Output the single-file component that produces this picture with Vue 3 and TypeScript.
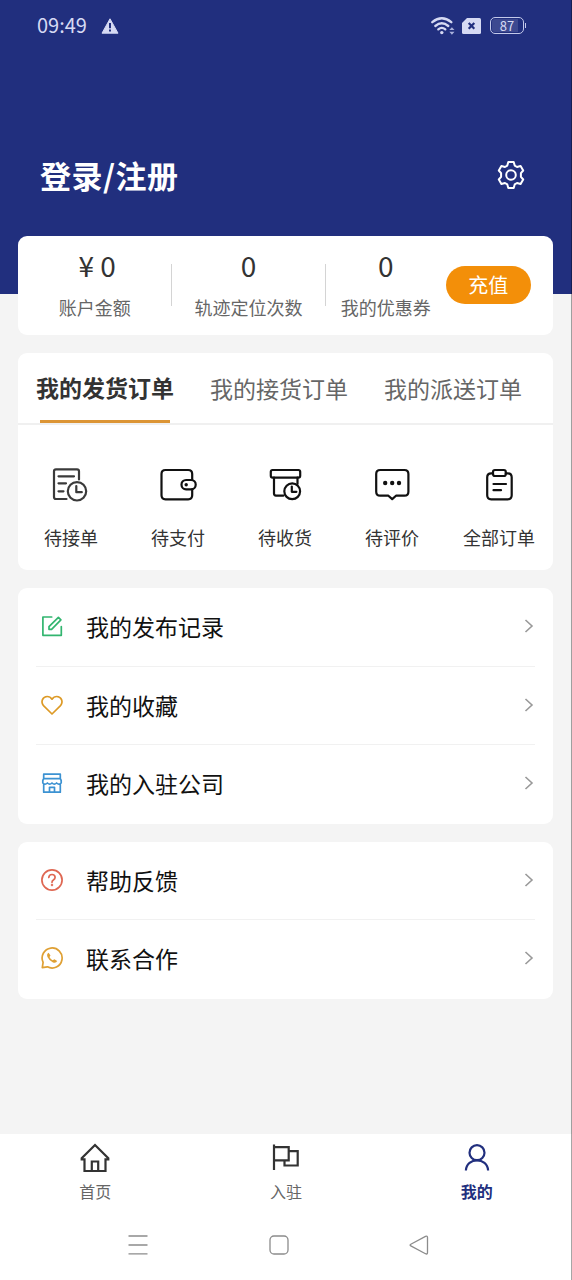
<script setup lang="ts">
interface Stat {
  value: string
  label: string
}

interface OrderEntry {
  icon: 'accept' | 'pay' | 'receive' | 'review' | 'all'
  label: string
}

interface MenuItem {
  icon: 'edit' | 'heart' | 'shop' | 'help' | 'phone'
  label: string
}

interface TabItem {
  icon: 'home' | 'flag' | 'user'
  label: string
  active: boolean
}

const stats: Stat[] = [
  { value: '¥ 0', label: '账户金额' },
  { value: '0', label: '轨迹定位次数' },
  { value: '0', label: '我的优惠券' },
]

const orderTabs: string[] = ['我的发货订单', '我的接货订单', '我的派送订单']

const orders: OrderEntry[] = [
  { icon: 'accept', label: '待接单' },
  { icon: 'pay', label: '待支付' },
  { icon: 'receive', label: '待收货' },
  { icon: 'review', label: '待评价' },
  { icon: 'all', label: '全部订单' },
]

const menus: MenuItem[][] = [
  [
    { icon: 'edit', label: '我的发布记录' },
    { icon: 'heart', label: '我的收藏' },
    { icon: 'shop', label: '我的入驻公司' },
  ],
  [
    { icon: 'help', label: '帮助反馈' },
    { icon: 'phone', label: '联系合作' },
  ],
]

const tabs: TabItem[] = [
  { icon: 'home', label: '首页', active: false },
  { icon: 'flag', label: '入驻', active: false },
  { icon: 'user', label: '我的', active: true },
]
</script>

<template>
  <div class="page">
    <header class="hero">
      <div class="status">
        <span class="time">09:49</span>
        <svg class="warn" width="18" height="16" viewBox="0 0 18 16">
          <path d="M9 .8 17 15.2H1z" fill="#d6daf3" stroke="#d6daf3" stroke-linejoin="round" />
          <path d="M9 5v5.2M9 11.600v2" stroke="#212f7e" stroke-width="2" />
        </svg>
        <div class="signals">
          <svg width="24" height="18" viewBox="0 0 24 18">
            <g fill="none" stroke="#d6daf3" stroke-width="2.300" stroke-linecap="round">
              <path d="M1.300 5.200Q10.800-2.600 20.300 5.200" />
              <path d="M4.300 9Q10.800 3.500 17.300 9" />
              <path d="M7.300 12.400Q10.800 9.400 14.300 12.400" />
            </g>
            <circle cx="10.800" cy="15.600" r="1.700" fill="#d6daf3" />
            <path d="M18.300 13.100 20.900 10.200 23.500 13.100zM18.300 14.800h5.200L20.900 17.700z" fill="#a9b1dc" />
          </svg>
          <svg class="sim" width="19" height="16" viewBox="0 0 19 16">
            <path d="M5 0h12.500Q19 0 19 1.500v13Q19 16 17.500 16h-16Q0 16 0 14.500V5z" fill="#d6daf3" />
            <path d="m6.700 5 5.600 5.800m0-5.800-5.600 5.800" stroke="#212f7e" stroke-width="2.200" />
          </svg>
          <span class="battery"><span class="level">87</span></span>
        </div>
      </div>
      <div class="account">
        <h1>登录/注册</h1>
        <svg width="30" height="30" viewBox="0 0 30 30" fill="none" stroke="#fff" stroke-width="2" stroke-linejoin="round">
          <path d="M12.300 2.100h5.400l1 3.500 2.300 1.400 3.600-1 2.600 4.500-2.300 2.700v3.600l2.300 2.700-2.600 4.500-3.600-1-2.300 1.400-1 3.500h-5.400l-1-3.500L9 23l-3.600 1-2.600-4.500 2.300-2.700v-3.600l-2.300-2.700L5.400 6 9 7l2.300-1.400z" />
          <circle cx="15" cy="15" r="4.800" />
        </svg>
      </div>
    </header>

    <main class="content">
      <section class="card stats">
        <div v-for="s in stats" :key="s.label" class="stat">
          <strong>{{ s.value }}</strong>
          <span>{{ s.label }}</span>
        </div>
        <button class="recharge" type="button">充值</button>
      </section>

      <section class="card orders">
        <nav class="order-tabs">
          <span v-for="(t, i) in orderTabs" :key="t" class="order-tab" :class="{ current: i === 0 }">{{ t }}</span>
        </nav>
        <div class="entries">
          <div v-for="o in orders" :key="o.icon" class="entry">
            <svg width="40" height="40" viewBox="0 0 40 40" class="line-icon" :class="o.icon">
              <template v-if="o.icon === 'accept'">
                <path d="M28 14.500V6.300q0-2-2-2H5q-2 0-2 2V32q0 2 2 2h10.500M7.500 11.300H23M7.500 18.300H15M7.500 26.300h5" />
                <circle cx="26" cy="26.300" r="9.200" />
                <path d="M25.300 21v6.200h5.500" />
              </template>
              <template v-else-if="o.icon === 'pay'">
                <path d="M34.200 15V9q0-4-4-4H7.500q-4 0-4 4v21.300q0 4 4 4h22.700q4 0 4-4v-6" />
                <rect x="23.500" y="15" width="14.200" height="9.300" rx="4.600" />
                <circle cx="28.200" cy="19.700" r="1.700" class="dot" />
              </template>
              <template v-else-if="o.icon === 'receive'">
                <rect x="5.800" y="5" width="29.400" height="7.600" rx="1.800" />
                <path d="M9 12.600v16q0 2 2 2h7.500M32.500 12.600V19" />
                <circle cx="27.200" cy="26.300" r="7.900" />
                <path d="M26.800 21.500v5.300h4.600" />
              </template>
              <template v-else-if="o.icon === 'review'">
                <path d="M8.200 5h24.200q4 0 4 4v17.700q0 4-4 4H24l-3.800 3.400-3.800-3.400H8.200q-4 0-4-4V9q0-4 4-4z" />
                <circle cx="13.200" cy="18" r="2.200" class="dot" />
                <circle cx="20.200" cy="18" r="2.200" class="dot" />
                <circle cx="27" cy="18" r="2.200" class="dot" />
              </template>
              <template v-else>
                <path d="M14 8.300h-1.800q-4 0-4 4v18q0 4 4 4h16.500q4 0 4-4v-18q0-4-4-4h-2M14.500 19h12.500M14.500 25.200h7.500" />
                <rect x="14" y="5" width="12.800" height="6" rx="2" />
              </template>
            </svg>
            <span>{{ o.label }}</span>
          </div>
        </div>
      </section>

      <section v-for="(group, g) in menus" :key="g" class="card menu">
        <div v-for="m in group" :key="m.icon" class="row">
          <svg class="row-icon" :class="m.icon" width="24" height="24" viewBox="0 0 24 24">
            <template v-if="m.icon === 'edit'">
              <path d="M11.700 3H2.900v18.300h18.400v-8.800" />
              <path d="M9 15.300v-2.600l9.400-9.300 2.500 2.500-9.300 9.400z" />
            </template>
            <template v-else-if="m.icon === 'heart'">
              <path d="M12 21 4 13.200C-.2 8.800 3 3.500 7.200 3.500c2.300 0 3.800 1.200 4.800 2.700 1-1.500 2.500-2.700 4.800-2.700 4.200 0 7.400 5.300 3.200 9.700z" />
            </template>
            <template v-else-if="m.icon === 'shop'">
              <path d="M3.700 3.200h16.600v4.500H3.700zM3.700 7.700 2.800 9.500v2.500q2.300 2.400 4.600 0 2.300 2.400 4.600 0 2.300 2.400 4.600 0 2.300 2.400 4.600 0V9.500l-.9-1.800M3.700 13.300v7.900h16.600v-7.900M9.500 21v-4.700h5V21" />
            </template>
            <template v-else-if="m.icon === 'help'">
              <circle cx="12" cy="12" r="10.100" />
              <path d="M8.800 9.500q.2-3 3.200-3t3.100 2.800q0 1.600-1.700 2.600-1.400.8-1.400 2.400" />
              <circle cx="12" cy="17" r=".4" />
            </template>
            <template v-else>
              <path d="M2.300 21.600 3.100 16.300A10 10 0 1 1 7.400 20.800z" />
              <path d="M8.600 6.800q-2.300 1.100-1.100 4.300 1.700 4 5.500 5.400 3.100 1 4.200-1.400l-2.800-1.900-1.700 1.100q-2.200-1-3.200-3.200l1-1.600z" class="handset" />
            </template>
          </svg>
          <span>{{ m.label }}</span>
          <svg class="chevron" width="10" height="14" viewBox="0 0 10 14">
            <path d="m1.500 1 6.500 6-6.500 6" />
          </svg>
        </div>
      </section>
    </main>

    <footer class="bottom">
      <nav class="tabbar">
        <div v-for="t in tabs" :key="t.icon" class="tab" :class="{ active: t.active }">
          <svg width="32" height="32" viewBox="0 0 32 32">
            <path v-if="t.icon === 'home'" d="M5.500 17.300V29h21V17.300h2.800v-1.200L16 3 2.700 16.100v1.200zM12.800 29V19.500h6.400V29" />
            <path v-else-if="t.icon === 'flag'" d="M4 2.500V28M4 5.200h14.700v13.200H4M18.700 9.200h9v14.300H14.500v-5" />
            <template v-else>
              <circle cx="16" cy="10.700" r="7.500" />
              <path d="M4.900 28.500C5.500 15 26.500 15 27.100 28.500" />
            </template>
          </svg>
          <span>{{ t.label }}</span>
        </div>
      </nav>
      <div class="system">
        <svg width="22" height="22" viewBox="0 0 22 22"><path d="M1.500 2h19M1.500 11h19M1.500 19.800h19" /></svg>
        <svg width="22" height="22" viewBox="0 0 22 22"><rect x="2" y="2" width="18" height="18" rx="4" /></svg>
        <svg width="22" height="22" viewBox="0 0 22 22"><path d="M2.800 10.200 17.500 2.400q2-.8 2 1.200v15q0 2-2 1.100L2.800 11.900q-1.500-.8 0-1.700z" /></svg>
      </div>
    </footer>
  </div>
</template>

<style>
body {
  margin: 0;
}
</style>

<style scoped>
.page {
  position: relative;
  display: flex;
  flex-direction: column;
  width: 572px;
  height: 1280px;
  overflow: hidden;
  background: #f4f4f4;
  color: #333;
  font-family: "Noto Sans CJK SC", sans-serif;
}

.page::after {
  content: "";
  position: absolute;
  inset: 0 0 0 auto;
  width: 1px;
  background: rgba(0, 0, 0, 0.35);
}

svg {
  display: block;
  flex: none;
}

.hero {
  box-sizing: border-box;
  height: 294px;
  flex: none;
  background: #212f7e;
}

.status {
  display: flex;
  align-items: center;
  height: 51px;
  padding: 0 46px 0 37px;
  color: #d6daf3;
}

.time {
  margin-bottom: 2px;
  font-size: 20px;
  line-height: 30px;
}

.warn {
  margin-left: 14px;
}

.signals {
  display: flex;
  align-items: center;
  margin-left: auto;
}

.sim {
  margin: 0 9px 0 7px;
}

.battery {
  position: relative;
  box-sizing: border-box;
  display: flex;
  width: 34px;
  height: 17px;
  padding: 1px;
  margin-right: 2px;
  border: 1.500px solid #c3c9ea;
  border-radius: 5px;
}

.battery::after {
  content: "";
  position: absolute;
  top: 5px;
  right: -3px;
  width: 1.500px;
  height: 5px;
  background: #c3c9ea;
}

.level {
  flex: 1;
  border-radius: 3px;
  background: linear-gradient(90deg, #3d4990 86%, transparent 86%);
  font-size: 13px;
  line-height: 13px;
  text-align: center;
}

.account {
  display: flex;
  align-items: center;
  justify-content: space-between;
  height: 60px;
  padding: 0 46px 0 40px;
  margin-top: 94px;
  color: #fff;
}

h1 {
  margin: 0;
  font-size: 31px;
  font-weight: 700;
  letter-spacing: 0.5px;
  line-height: 46px;
}

.content {
  display: flex;
  flex: 1;
  flex-direction: column;
  gap: 18px;
  padding: 0 19px 0 18px;
  margin-top: -58px;
}

.card {
  border-radius: 9px;
  background: #fff;
}

.stats {
  display: grid;
  grid-template-columns: 153.500px 154px 120.500px 84.500px;
  align-items: center;
  height: 99px;
}

.stat {
  position: relative;
  display: flex;
  flex-direction: column;
  align-items: center;
  color: #666;
  font-size: 18px;
  line-height: 26px;
  white-space: nowrap;
}

.stat strong {
  margin: -4px 0 12px;
  color: #333;
  font-size: 28px;
  font-weight: 400;
  line-height: 34px;
}

.stat:first-child strong {
  padding-left: 5px;
}

.stat:nth-child(-n + 2)::after {
  content: "";
  position: absolute;
  top: 12px;
  right: 0;
  width: 1px;
  height: 42px;
  background: #d4d4d4;
}

.recharge {
  height: 38px;
  padding: 0;
  margin-bottom: 1px;
  border: 0;
  border-radius: 19px;
  background: #f38f09;
  color: #fff;
  font: 20px/38px "Noto Sans CJK SC", sans-serif;
}

.orders {
  height: 217px;
}

.order-tabs {
  display: flex;
  box-sizing: border-box;
  height: 72px;
  border-bottom: 2px solid #f0f0f0;
}

.order-tab {
  position: relative;
  width: 174px;
  color: #666;
  font-size: 23px;
  line-height: 71px;
  text-align: center;
}

.current {
  color: #333;
  font-weight: 700;
  line-height: 69px;
}

.current::after {
  content: "";
  position: absolute;
  top: 67px;
  left: 22px;
  width: 130px;
  height: 3px;
  background: #dc9535;
}

.entries {
  display: grid;
  grid-template-columns: repeat(5, 107px);
  padding-top: 40px;
  margin-left: -0.500px;
}

.entry {
  display: flex;
  flex-direction: column;
  align-items: center;
  gap: 19px;
  font-size: 18px;
  line-height: 26px;
}

.line-icon {
  fill: none;
  stroke: #111;
  stroke-width: 2.200;
  stroke-linecap: round;
  stroke-linejoin: round;
}

.accept {
  stroke: #3a3a3a;
}

.dot {
  fill: #111;
  stroke: none;
}

.menu {
  padding: 0 18px;
}

.row {
  box-sizing: border-box;
  display: flex;
  align-items: center;
  height: 78.500px;
  padding: 0 1px 1px 4px;
  border-bottom: 1px solid #f1f1f1;
  color: #111;
  font-size: 23px;
  line-height: 34px;
}

.row:last-child {
  border-bottom-color: transparent;
}

.row span {
  margin-left: 22px;
}

.row-icon {
  fill: none;
  stroke-width: 1.700;
  stroke-linecap: round;
  stroke-linejoin: round;
}

.edit {
  stroke: #32b56f;
}

.heart {
  stroke: #dd9a26;
}

.shop {
  stroke: #3c92d2;
}

.help {
  stroke: #df6752;
}

.phone {
  stroke: #dfa034;
}

.handset {
  fill: #dfa034;
  stroke: none;
}

.chevron {
  margin-left: auto;
  fill: none;
  stroke: #999;
  stroke-width: 1.600;
}

.bottom {
  height: 146px;
  flex: none;
  background: #fff;
}

.tabbar {
  display: grid;
  grid-template-columns: repeat(3, 1fr);
  padding-top: 8px;
}

.tab {
  display: flex;
  flex-direction: column;
  align-items: center;
  gap: 5px;
  color: #666;
  font-size: 16px;
  line-height: 24px;
}

.tab svg {
  fill: none;
  stroke: #333;
  stroke-width: 2.200;
}

.active {
  color: #212f7e;
  font-weight: 700;
}

.tab.active svg {
  stroke: #212f7e;
}

.system {
  display: flex;
  justify-content: space-between;
  padding: 31px 142px 0 127px;
}

.system svg {
  fill: none;
  stroke: #8c8c8c;
  stroke-width: 1.300;
}
</style>
